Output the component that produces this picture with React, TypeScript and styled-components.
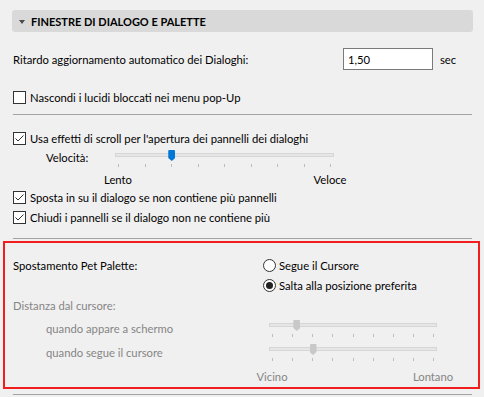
import React from "react";
import styled, { createGlobalStyle } from "styled-components";

const GlobalStyle = createGlobalStyle`
  html, body {
    margin: 0;
    padding: 0;
    background: #f0f0f0;
  }
  body {
    font-family: Lato, "Noto Sans", sans-serif;
    font-size: 11.25px;
    color: #000;
  }
`;

const Page = styled.div`
  width: 484px;
  box-sizing: border-box;
  padding: 10px 12px 0 13px;
  display: flex;
  flex-direction: column;
`;

const SectionHeader = styled.div`
  height: 22px;
  margin: 0 -1px;
  padding-left: 7px;
  background: #d9d9d9;
  border-radius: 3px;
  display: flex;
  align-items: center;
  gap: 6px;
`;

const Caret = styled.span`
  width: 0;
  height: 0;
  border-left: 3.5px solid transparent;
  border-right: 3.5px solid transparent;
  border-top: 4px solid #4a4a4a;
  margin-top: 1px;
`;

const HeaderTitle = styled.span`
  font-weight: 700;
  font-size: 11px;
`;

const Row = styled.div<{ $h: number; $mt?: number; $indent?: number }>`
  height: ${(p) => p.$h}px;
  margin-top: ${(p) => p.$mt ?? 0}px;
  padding-left: ${(p) => p.$indent ?? 0}px;
  display: flex;
  align-items: center;
`;

const Label = styled.span<{ $w?: number; $muted?: boolean }>`
  width: ${(p) => (p.$w ? `${p.$w}px` : "auto")};
  flex: none;
  white-space: nowrap;
  color: ${(p) => (p.$muted ? "#858585" : "#000")};
`;

const NumberField = styled.input`
  width: 90px;
  height: 22px;
  box-sizing: border-box;
  border: 1px solid #7a7a7a;
  background: #fff;
  padding: 0 4px;
  font: inherit;
  color: #000;
  outline: none;
`;

const Unit = styled.span`
  margin-left: 7px;
`;

const Divider = styled.div<{ $mt: number }>`
  height: 1px;
  margin-top: ${(p) => p.$mt}px;
  background: #a3a3a3;
`;

const BoxMark = styled.span`
  width: 13px;
  height: 13px;
  box-sizing: border-box;
  border: 1px solid #333;
  background: #fff;
  display: flex;
  align-items: center;
  justify-content: center;
  flex: none;
`;

const ChoiceLabel = styled.label<{ $gap: number }>`
  display: flex;
  align-items: center;
  gap: ${(p) => p.$gap}px;
  white-space: nowrap;
`;

const RadioMark = styled.span<{ $on: boolean }>`
  width: 13px;
  height: 13px;
  box-sizing: border-box;
  border: 1px solid #333;
  border-radius: 50%;
  background: #fff;
  display: flex;
  align-items: center;
  justify-content: center;
  flex: none;

  &::after {
    content: "";
    width: 7px;
    height: 7px;
    border-radius: 50%;
    background: #222;
    display: ${(p) => (p.$on ? "block" : "none")};
  }
`;

function CheckBox({ checked, children }: { checked: boolean; children: React.ReactNode }) {
  return (
    <ChoiceLabel $gap={4}>
      <BoxMark>
        {checked && (
          <svg width="11" height="11" viewBox="0 0 11 11">
            <polyline points="1.5,5.5 4,8 9.5,2.5" fill="none" stroke="#333" strokeWidth="1" />
          </svg>
        )}
      </BoxMark>
      {children}
    </ChoiceLabel>
  );
}

function Radio({ checked, children }: { checked: boolean; children: React.ReactNode }) {
  return (
    <ChoiceLabel $gap={3}>
      <RadioMark $on={checked} />
      {children}
    </ChoiceLabel>
  );
}

const SliderBox = styled.div<{ $w: number; $top: number; $ml?: number }>`
  position: relative;
  width: ${(p) => p.$w}px;
  margin-left: ${(p) => p.$ml ?? 0}px;
  align-self: flex-start;
  padding-top: ${(p) => p.$top}px;
  display: flex;
  flex-direction: column;
  gap: 7px;
`;

const Track = styled.div`
  height: 4px;
  box-sizing: border-box;
  border: 1px solid #d6d6d6;
  background: #e6e6e6;
`;

const Ticks = styled.div`
  height: 3px;
  padding: 0 3px;
  display: flex;
  justify-content: space-between;
`;

const Tick = styled.span`
  width: 1px;
  height: 3px;
  background: #bdbdbd;
`;

const Thumb = styled.div<{ $disabled?: boolean; $top: number }>`
  position: absolute;
  top: ${(p) => p.$top - 3}px;
  width: 7px;
  height: 11px;
  margin-left: -3px;
  background: ${(p) => (p.$disabled ? "#c8c8c8" : "#0078d7")};
  clip-path: polygon(0 0, 100% 0, 100% 72%, 50% 100%, 0 72%);
  border-radius: 1px 1px 0 0;
`;

function Slider({
  width,
  value,
  top,
  ml,
  disabled,
}: {
  width: number;
  value: number;
  top: number;
  ml?: number;
  disabled?: boolean;
}) {
  const span = width - 6;
  return (
    <SliderBox $w={width} $top={top} $ml={ml}>
      <Track />
      <Ticks>
        {Array.from({ length: 9 }).map((_, i) => (
          <Tick key={i} />
        ))}
      </Ticks>
      <Thumb $top={top} $disabled={disabled} style={{ left: 3 + span * value }} />
    </SliderBox>
  );
}

const ScaleRow = styled.div<{ $h: number; $left: number; $span: number; $muted?: boolean }>`
  height: ${(p) => p.$h}px;
  margin-left: ${(p) => p.$left}px;
  width: ${(p) => p.$span}px;
  display: flex;
  justify-content: space-between;
  align-items: flex-end;
  line-height: 14px;
  color: ${(p) => (p.$muted ? "#858585" : "#000")};
`;

const ScaleMark = styled.span`
  width: 0;
  display: flex;
  justify-content: center;
  white-space: nowrap;
`;

const Highlight = styled.div`
  margin: 2px -8px 0 -10px;
  padding: 12px 0 3px 8px;
  border: 2px solid #f21d1d;
  display: grid;
  grid-template-columns: 250px 1fr;
  grid-auto-rows: auto;
`;

const Cell = styled.div<{ $h: number; $indent?: number }>`
  height: ${(p) => p.$h}px;
  padding-left: ${(p) => p.$indent ?? 0}px;
  display: flex;
  align-items: center;
`;

export default function App() {
  return (
    <>
      <GlobalStyle />
      <Page>
        <SectionHeader>
          <Caret />
          <HeaderTitle>FINESTRE DI DIALOGO E PALETTE</HeaderTitle>
        </SectionHeader>

        <Row $h={22} $mt={16}>
          <Label $w={330}>Ritardo aggiornamento automatico dei Dialoghi:</Label>
          <NumberField defaultValue="1,50" readOnly />
          <Unit>sec</Unit>
        </Row>

        <Row $h={19} $mt={18}>
          <CheckBox checked={false}>Nascondi i lucidi bloccati nei menu pop-Up</CheckBox>
        </Row>

        <Divider $mt={7} />

        <Row $h={20} $mt={13}>
          <CheckBox checked>Usa effetti di scroll per l'apertura dei pannelli dei dialoghi</CheckBox>
        </Row>
        <Row $h={19} $indent={33}>
          <Label $w={69}>Velocità:</Label>
          <Slider width={219} value={2 / 8} top={5} />
        </Row>
        <ScaleRow $h={20} $left={105} $span={212}>
          <ScaleMark>Lento</ScaleMark>
          <ScaleMark>Veloce</ScaleMark>
        </ScaleRow>
        <Row $h={20}>
          <CheckBox checked>Sposta in su il dialogo se non contiene più pannelli</CheckBox>
        </Row>
        <Row $h={20}>
          <CheckBox checked>Chiudi i pannelli se il dialogo non ne contiene più</CheckBox>
        </Row>

        <Divider $mt={11} />

        <Highlight>
          <Cell $h={20}>
            <Label>Spostamento Pet Palette:</Label>
          </Cell>
          <Cell $h={20}>
            <Radio checked={false}>Segue il Cursore</Radio>
          </Cell>
          <Cell $h={20} />
          <Cell $h={20}>
            <Radio checked>Salta alla posizione preferita</Radio>
          </Cell>
          <Cell $h={21}>
            <Label $muted>Distanza dal cursore:</Label>
          </Cell>
          <Cell $h={21} />
          <Cell $h={24} $indent={33}>
            <Label $muted>quando appare a schermo</Label>
          </Cell>
          <Cell $h={24}>
            <Slider width={168} value={0.15} top={7} ml={6} disabled />
          </Cell>
          <Cell $h={24} $indent={33}>
            <Label $muted>quando segue il cursore</Label>
          </Cell>
          <Cell $h={24}>
            <Slider width={168} value={2 / 8} top={7} ml={6} disabled />
          </Cell>
          <Cell $h={20} />
          <ScaleRow $h={20} $left={9} $span={161} $muted>
            <ScaleMark>Vicino</ScaleMark>
            <ScaleMark>Lontano</ScaleMark>
          </ScaleRow>
        </Highlight>

        <Divider $mt={5} />
      </Page>
    </>
  );
}
